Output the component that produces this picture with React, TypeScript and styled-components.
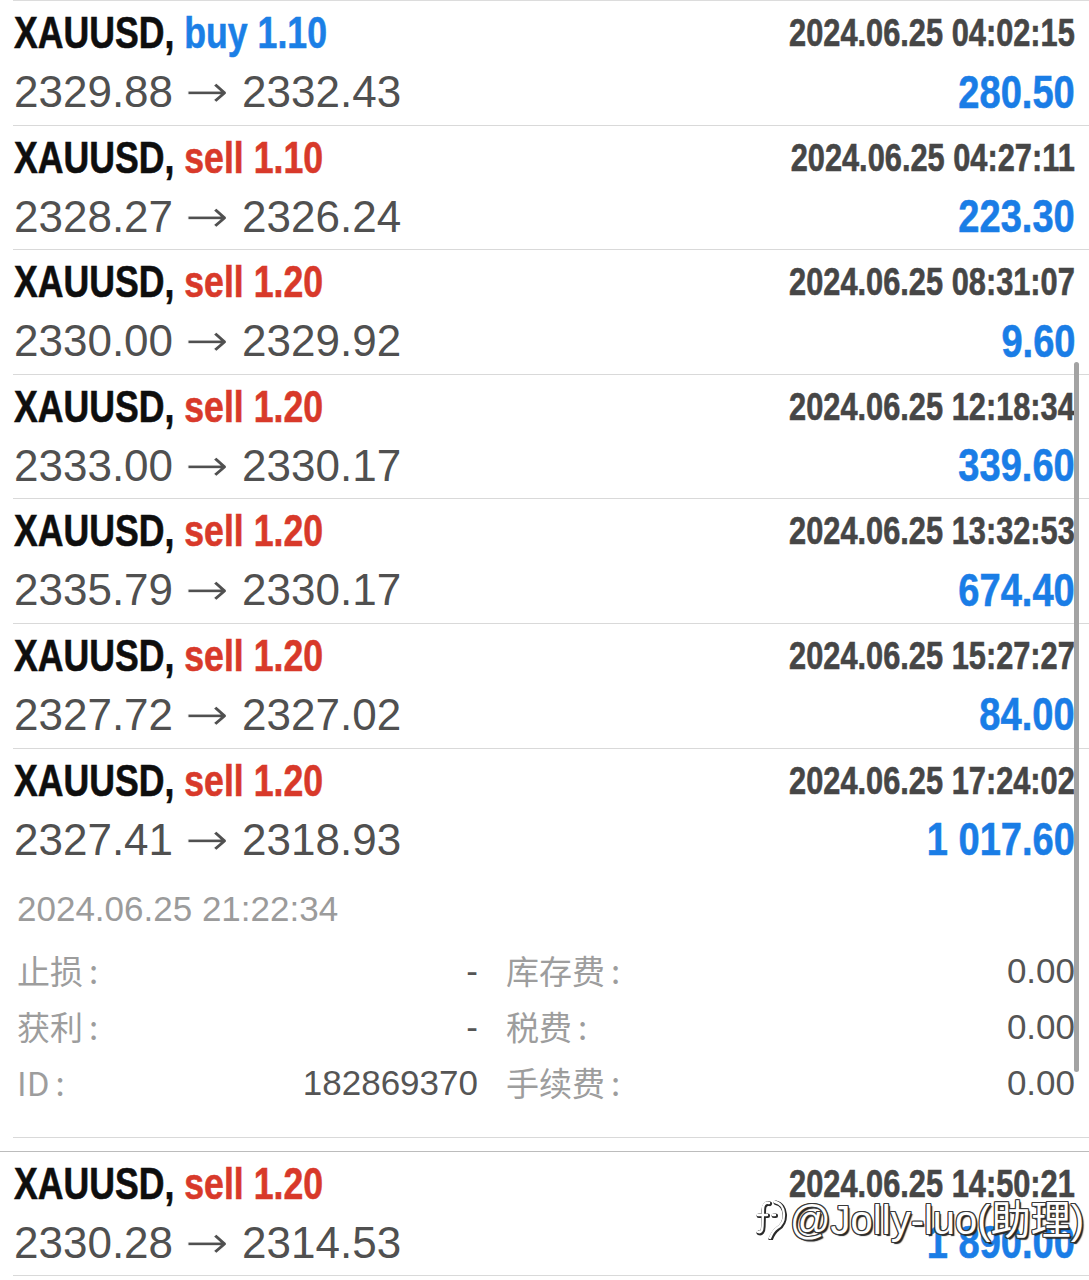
import React from 'react'
import styled, { createGlobalStyle } from 'styled-components'

const GlobalStyle = createGlobalStyle`
  html, body {
    margin: 0;
    padding: 0;
    background: #ffffff;
  }
  body {
    font-family: "Liberation Sans", Arial, sans-serif;
  }
`

const Screen = styled.div`
  position: relative;
  width: 1089px;
  height: 1280px;
  overflow: hidden;
  background: #ffffff;
`

const List = styled.div`
  margin-left: 13px;
  border-top: 1px solid #dcdcdc;
`

const Row = styled.div`
  box-sizing: border-box;
  padding: 0 14px 0 1px;
  border-bottom: 1px solid #d9d9d9;
  min-height: 124.6px;
`

const TopLine = styled.div`
  height: 64px;
  display: flex;
  align-items: center;
  justify-content: space-between;
`

const BottomLine = styled.div`
  height: 52px;
  display: flex;
  align-items: center;
  justify-content: space-between;
`

const Condensed = styled.span<{ $origin: 'left' | 'right' }>`
  display: inline-block;
  white-space: nowrap;
  font-weight: 700;
  line-height: 1;
  -webkit-text-stroke: 0.6px currentColor;
  transform: scaleX(0.81);
  transform-origin: ${({ $origin }) => $origin} center;
`

const Title = styled(Condensed)`
  font-size: 44px;
  color: #0e0e0e;
`

const Side = styled.span<{ $side: 'buy' | 'sell' }>`
  color: ${({ $side }) => ($side === 'buy' ? '#1b7fe6' : '#d8392a')};
`

const Time = styled(Condensed)`
  font-size: 38px;
  color: #464646;
`

const Profit = styled(Condensed)`
  font-size: 47px;
  color: #1a7de6;
`

const Prices = styled.span`
  font-size: 44px;
  line-height: 1;
  color: #505050;
  white-space: nowrap;
`

const Arrow = styled.span`
  display: inline-block;
  font-family: "DejaVu Sans", sans-serif;
  font-size: 46px;
  line-height: 1;
  color: #505050;
  -webkit-text-stroke: 1.1px #ffffff;
  transform: scaleX(1.15);
  transform-origin: left center;
  margin-right: 6px;
`

const Details = styled.div`
  padding: 24px 0 26px 3px;
`

const CloseTime = styled.div`
  height: 40px;
  display: flex;
  align-items: center;
  font-size: 35px;
  color: #9b9b9b;
  margin-bottom: 14px;
`

const Grid = styled.div`
  display: grid;
  grid-template-columns: 461px 1fr;
  column-gap: 28px;
  grid-auto-rows: 56px;
`

const Cell = styled.div`
  display: flex;
  align-items: center;
  justify-content: space-between;
`

const Label = styled.span`
  font-family: "Noto Sans CJK SC", "Liberation Sans", sans-serif;
  font-size: 33px;
  color: #9d9d9d;
  line-height: 1;
`

const Colon = styled.span`
  margin-left: 6px;
`

const Value = styled.span`
  font-size: 35px;
  color: #555555;
  line-height: 1;
`

const GroupBreak = styled.div`
  height: 13px;
  border-bottom: 1px solid #bcbcbc;
  margin-left: -13px;
`

const ScrollBar = styled.div`
  position: absolute;
  left: 1074px;
  top: 362px;
  width: 5px;
  height: 710px;
  border-radius: 3px;
  background: #a3a3a3;
`

const Watermark = styled.div`
  position: absolute;
  left: 756px;
  top: 1200px;
  display: flex;
  align-items: center;
  gap: 2px;
`

const WatermarkText = styled.span`
  font-family: "Liberation Sans", "Noto Sans CJK SC", sans-serif;
  font-size: 40px;
  font-weight: 400;
  line-height: 1;
  color: #ffffff;
  white-space: nowrap;
  text-shadow: -1px -1px 0 #3a3a3a, 1px -1px 0 #3a3a3a, -1px 1px 0 #3a3a3a, 1px 1px 0 #2a2a2a,
    0 1px 0 #3a3a3a, 0 -1px 0 #3a3a3a, 1px 0 0 #3a3a3a, -1px 0 0 #3a3a3a, 2px 2px 1px #222;
`

type Trade = {
  side: 'buy' | 'sell'
  lots: string
  open: string
  close: string
  time: string
  profit: string
}

const trades: Trade[] = [
  { side: 'buy', lots: '1.10', open: '2329.88', close: '2332.43', time: '2024.06.25 04:02:15', profit: '280.50' },
  { side: 'sell', lots: '1.10', open: '2328.27', close: '2326.24', time: '2024.06.25 04:27:11', profit: '223.30' },
  { side: 'sell', lots: '1.20', open: '2330.00', close: '2329.92', time: '2024.06.25 08:31:07', profit: '9.60' },
  { side: 'sell', lots: '1.20', open: '2333.00', close: '2330.17', time: '2024.06.25 12:18:34', profit: '339.60' },
  { side: 'sell', lots: '1.20', open: '2335.79', close: '2330.17', time: '2024.06.25 13:32:53', profit: '674.40' },
  { side: 'sell', lots: '1.20', open: '2327.72', close: '2327.02', time: '2024.06.25 15:27:27', profit: '84.00' },
  { side: 'sell', lots: '1.20', open: '2327.41', close: '2318.93', time: '2024.06.25 17:24:02', profit: '1 017.60' },
]

const nextGroup: Trade = {
  side: 'sell',
  lots: '1.20',
  open: '2330.28',
  close: '2314.53',
  time: '2024.06.25 14:50:21',
  profit: '1 890.00',
}

const details = [
  ['止损', '-', '库存费', '0.00'],
  ['获利', '-', '税费', '0.00'],
  ['ID', '182869370', '手续费', '0.00'],
]

function TradeRow({ trade, children }: { trade: Trade; children?: React.ReactNode }) {
  return (
    <Row>
      <TopLine>
        <Title $origin="left">
          XAUUSD, <Side $side={trade.side}>{trade.side} {trade.lots}</Side>
        </Title>
        <Time $origin="right">{trade.time}</Time>
      </TopLine>
      <BottomLine>
        <Prices>
          {trade.open} <Arrow>→</Arrow> {trade.close}
        </Prices>
        <Profit $origin="right">{trade.profit}</Profit>
      </BottomLine>
      {children}
    </Row>
  )
}

function ZhihuMark() {
  const d =
    'M13 3 C9 2 7 5 7 9 L6.5 26 C6.5 31 4.5 33 2 32 M2 15 L11 15 M17 15 L19 15 M19 2 C30 4 31 22 21 28 C18 30 16 33 14 38'
  return (
    <svg width="32" height="40" viewBox="0 0 32 40" fill="none">
      <g strokeLinecap="round" strokeLinejoin="round">
        <path d={d} stroke="#2a2a2a" strokeWidth="4.6" transform="translate(0.8 0.8)" />
        <path d={d} stroke="#ffffff" strokeWidth="2.4" />
      </g>
    </svg>
  )
}

export default function App() {
  const last = trades.length - 1
  return (
    <Screen>
      <GlobalStyle />
      <List>
        {trades.map((t, i) =>
          i === last ? (
            <TradeRow key={i} trade={t}>
              <Details>
                <CloseTime>2024.06.25 21:22:34</CloseTime>
                <Grid>
                  {details.map(([l1, v1, l2, v2]) => (
                    <React.Fragment key={l1}>
                      <Cell>
                        <Label>
                          {l1}
                          <Colon>:</Colon>
                        </Label>
                        <Value>{v1}</Value>
                      </Cell>
                      <Cell>
                        <Label>
                          {l2}
                          <Colon>:</Colon>
                        </Label>
                        <Value>{v2}</Value>
                      </Cell>
                    </React.Fragment>
                  ))}
                </Grid>
              </Details>
            </TradeRow>
          ) : (
            <TradeRow key={i} trade={t} />
          )
        )}
        <GroupBreak />
        <TradeRow trade={nextGroup} />
      </List>
      <ScrollBar />
      <Watermark>
        <ZhihuMark />
        <WatermarkText>@Jolly-luo(助理)</WatermarkText>
      </Watermark>
    </Screen>
  )
}
